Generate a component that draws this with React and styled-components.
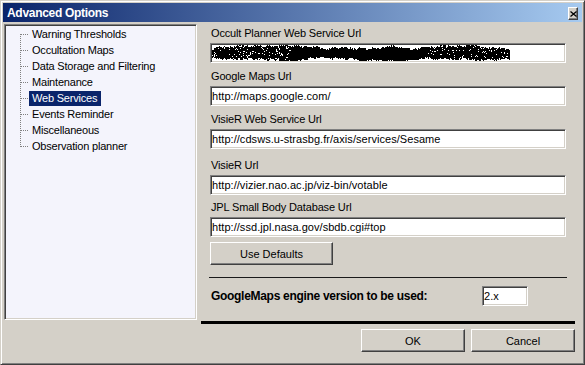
import React from "react";
import styled, { createGlobalStyle } from "styled-components";

const treeItems = [
  "Warning Thresholds",
  "Occultation Maps",
  "Data Storage and Filtering",
  "Maintenance",
  "Web Services",
  "Events Reminder",
  "Miscellaneous",
  "Observation planner",
];

const fields = [
  { label: "Occult Planner Web Service Url", value: null, gap: 0 },
  { label: "Google Maps Url", value: "http://maps.google.com/", gap: 7 },
  { label: "VisieR Web Service Url", value: "http://cdsws.u-strasbg.fr/axis/services/Sesame", gap: 7 },
  { label: "VisieR Url", value: "http://vizier.nao.ac.jp/viz-bin/votable", gap: 10 },
  { label: "JPL Small Body Database Url", value: "http://ssd.jpl.nasa.gov/sbdb.cgi#top", gap: 6 },
];

// the blacked-out url is a noisy marker scribble, built from seeded random pixels
function scribblePath() {
  let seed = 12345;
  const rnd = () => {
    seed = (seed * 16807) % 2147483647;
    return seed / 2147483647;
  };
  const W = 298;
  let top = 2.5;
  let bottom = 13;
  let d = "";
  for (let x = 0; x < W; x++) {
    top += (rnd() - 0.5) * 1.6;
    bottom += (rnd() - 0.5) * 1.6;
    top = Math.max(0.5, Math.min(4, top));
    bottom = Math.max(11.5, Math.min(15.5, bottom));
    let t = top;
    let b = bottom;
    if (x < 10) {
      t += (10 - x) * 0.25;
      b -= (10 - x) * 0.2;
    }
    if (x > W - 28) {
      const k = (x - (W - 28)) / 28;
      t += k * 3;
      b -= k * 2;
    }
    let density = 1;
    if (x < 80) density = 0.9;
    else if (x > 215) density = 0.92;
    for (let y = Math.floor(t); y <= Math.ceil(b); y++) {
      const edge = y === Math.floor(t) || y === Math.ceil(b) ? 0.55 : 1;
      if (rnd() < density * edge) d += `M${x} ${y}h1v1h-1z`;
    }
  }
  return d;
}

const scribble = scribblePath();

export default function App() {
  return (
    <>
      <GlobalStyle />
      <Window>
        <TitleBar>
          <TitleText>Advanced Options</TitleText>
          <CloseButton>
            <svg width="7" height="6" viewBox="0 0 7 6">
              <path d="M0.5 0.5 L6.5 5.5 M6.5 0.5 L0.5 5.5" stroke="#000" strokeWidth="1.3" />
            </svg>
          </CloseButton>
        </TitleBar>

        <Content>
          <Tree>
            {treeItems.map((item, i) => (
              <TreeRow key={item}>
                <svg width="9" height="16" viewBox="0 0 9 16" shapeRendering="crispEdges">
                  <line
                    x1="0.5"
                    x2="0.5"
                    y1={i === 0 ? 8 : 0}
                    y2={i === treeItems.length - 1 ? 9 : 16}
                    stroke="#808080"
                    strokeDasharray="1 1"
                  />
                  <line x1="1" x2="9" y1="8.5" y2="8.5" stroke="#808080" strokeDasharray="1 1" />
                </svg>
                <TreeLabel $selected={item === "Web Services"}>{item}</TreeLabel>
              </TreeRow>
            ))}
          </Tree>

          <RightColumn>
            <FieldsArea>
              {fields.map((f) => (
                <Field key={f.label} $gap={f.gap}>
                  <FieldLabel>{f.label}</FieldLabel>
                  <TextBox>
                    {f.value ? (
                      f.value
                    ) : (
                      <svg width="300" height="16" viewBox="0 0 300 16" shapeRendering="crispEdges">
                        <path d={scribble} fill="#000" />
                      </svg>
                    )}
                  </TextBox>
                </Field>
              ))}
              <Button $width={123} $top={5}>Use Defaults</Button>
            </FieldsArea>

            <ThinRule />

            <SettingRow>
              <BoldLabel>GoogleMaps engine version to be used:</BoldLabel>
              <SmallBox>2.x</SmallBox>
            </SettingRow>

            <ThickRule />

            <ButtonRow>
              <Button $width={104}>OK</Button>
              <Button $width={104}>Cancel</Button>
            </ButtonRow>
          </RightColumn>
        </Content>
      </Window>
    </>
  );
}

const GlobalStyle = createGlobalStyle`
  * { box-sizing: border-box; }
  body {
    margin: 0;
    background: #d4d0c8;
    overflow: hidden;
    font-family: "Liberation Sans", Arial, sans-serif;
  }
`;

const Window = styled.div`
  width: 585px;
  height: 365px;
  display: flex;
  flex-direction: column;
  padding: 2px;
  background: #d4d0c8;
  border: 1px solid;
  border-color: #d4d0c8 #404040 #404040 #d4d0c8;
  box-shadow: inset 1px 1px #ffffff, inset -1px -1px #808080;
`;

const TitleBar = styled.div`
  height: 19px;
  display: flex;
  justify-content: space-between;
  align-items: flex-start;
  padding: 2px 4px 0 4px;
  background: linear-gradient(90deg, #0a246a 0%, #a6caf0 100%);
`;

const TitleText = styled.div`
  color: #ffffff;
  font-size: 12px;
  font-weight: bold;
  line-height: 17px;
  letter-spacing: -0.3px;
`;

const CloseButton = styled.div`
  width: 10px;
  height: 13px;
  margin-top: 2px;
  display: flex;
  align-items: center;
  justify-content: center;
  background: #d4d0c8;
  border: 1px solid;
  border-color: #ffffff #404040 #404040 #ffffff;
  box-shadow: inset -1px -1px #808080;
`;

const Content = styled.div`
  display: flex;
  gap: 4px;
  margin-top: 2px;
  padding-left: 1px;
`;

const Tree = styled.div`
  width: 193px;
  height: 296px;
  flex-shrink: 0;
  padding: 1px 0 0 15px;
  background: #f4f4fc;
  border: 1px solid;
  border-color: #808080 #ffffff #ffffff #808080;
  box-shadow: inset 1px 1px #404040, inset -1px -1px #d4d0c8;
`;

const TreeRow = styled.div`
  display: flex;
  align-items: center;
  height: 16px;

  svg {
    flex-shrink: 0;
  }
`;

const TreeLabel = styled.span`
  padding: 0 4px 0 3px;
  height: 15px;
  line-height: 15px;
  font-size: 11px;
  letter-spacing: -0.2px;
  white-space: nowrap;
  color: ${(p) => (p.$selected ? "#ffffff" : "#000000")};
  background: ${(p) => (p.$selected ? "#0a246a" : "transparent")};
`;

const RightColumn = styled.div`
  width: 374px;
  display: flex;
  flex-direction: column;
  padding-top: 3px;
`;

const FieldsArea = styled.div`
  display: flex;
  flex-direction: column;
  padding: 0 9px;
`;

const Field = styled.div`
  display: flex;
  flex-direction: column;
  gap: 3px;
  margin-top: ${(p) => p.$gap}px;
`;

const FieldLabel = styled.div`
  font-size: 11px;
  line-height: 13px;
  letter-spacing: -0.15px;
  padding-left: 1px;
  color: #000000;
`;

const TextBox = styled.div`
  height: 20px;
  display: flex;
  align-items: center;
  padding: 0 1px;
  background: #ffffff;
  border: 1px solid;
  border-color: #808080 #ffffff #ffffff #808080;
  box-shadow: inset 1px 1px #404040, inset -1px -1px #d4d0c8;
  font-size: 11px;
  line-height: 18px;
  letter-spacing: 0.05px;
  color: #000000;
  white-space: nowrap;
  overflow: hidden;
`;

const Button = styled.div`
  width: ${(p) => p.$width}px;
  height: 23px;
  margin-top: ${(p) => p.$top || 0}px;
  display: flex;
  align-items: center;
  justify-content: center;
  background: #d4d0c8;
  border: 1px solid;
  border-color: #ffffff #404040 #404040 #ffffff;
  box-shadow: inset -1px -1px #808080;
  font-size: 11px;
  color: #000000;
`;

const ThinRule = styled.div`
  height: 1px;
  margin: 12px 8px 0 8px;
  background: #1a1a1a;
`;

const SettingRow = styled.div`
  display: flex;
  align-items: center;
  height: 20px;
  margin-top: 8px;
  padding: 0 47px 0 10px;
`;

const BoldLabel = styled.div`
  font-size: 12px;
  font-weight: bold;
  line-height: 14px;
  letter-spacing: -0.3px;
  color: #000000;
`;

const SmallBox = styled(TextBox)`
  width: 46px;
  margin-left: auto;
`;

const ThickRule = styled.div`
  height: 3px;
  margin-top: 15px;
  background: #000000;
`;

const ButtonRow = styled.div`
  display: flex;
  justify-content: flex-end;
  gap: 6px;
  margin-top: 5px;
`;
